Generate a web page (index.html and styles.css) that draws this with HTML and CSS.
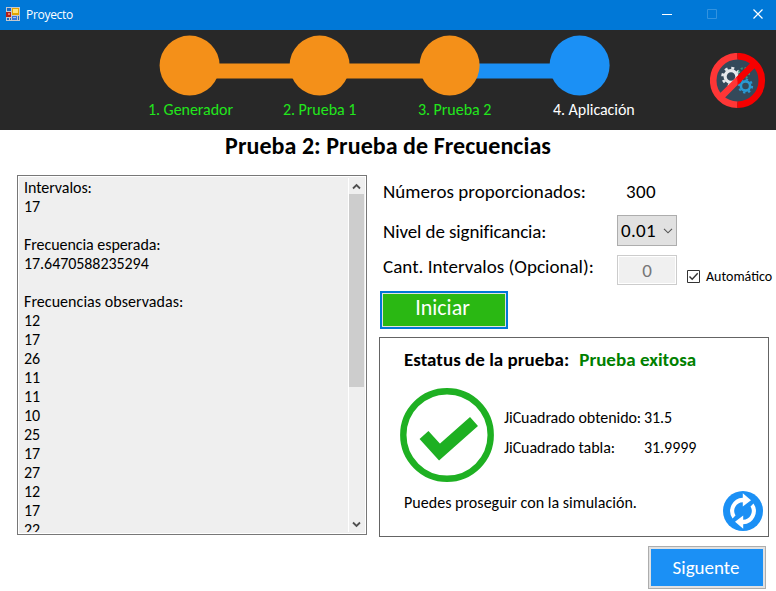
FILE: index.html
```html
<!DOCTYPE html>
<html lang="es">
<head>
<meta charset="utf-8">
<title>Proyecto</title>
<link rel="stylesheet" href="styles.css">
</head>
<body>
<header class="titlebar">
  <svg class="app-icon" width="14" height="14" viewBox="0 0 14 14" shape-rendering="crispEdges">
    <path d="M0 0h14v14H0z" fill="#c5c8cc"/>
    <path d="M1 1h4v3H1zM1 11h2v2H1zM4 11h1v2H4zM12 9h1v4h-1z" fill="#1768c4"/>
    <path d="M0 5h5v5H0z" fill="#b3201a"/><path d="M2 6h2v2H2z" fill="#ee7768"/>
    <path d="M6 1h7v7H6z" fill="#e2a400"/><path d="M7 2h5v4H7z" fill="#ffe477"/>
    <path d="M6 9h5v4H6z" fill="#3974d6"/><path d="M7 10h3v1H7z" fill="#99beff"/>
  </svg>
  <span class="app-name">Proyecto</span>
  <svg class="window-controls" width="98" height="12" viewBox="0 0 98 12" fill="none">
    <path d="M0 5.5h10" stroke="#fff"/>
    <path d="M45.5 .5h9v9h-9z" stroke="#3393df"/>
    <path d="M91.500 .5l9 9M100.500 .5l-9 9" stroke="#fff" stroke-width="1.2"/>
  </svg>
</header>
<section class="banner">
  <div class="stepper">
    <svg width="450" height="60" viewBox="0 0 450 60">
      <path d="M30 27.5h260v15H30z" fill="#f49019"/>
      <path d="M300 27.5h120v15H300z" fill="#1b90f5"/>
      <g fill="#f49019"><circle cx="29.6" cy="29.6" r="30"/><circle cx="159.6" cy="29.6" r="30"/><circle cx="289.6" cy="29.6" r="30"/></g>
      <circle cx="419.6" cy="29.6" r="30" fill="#1b90f5"/>
    </svg>
    <div class="step-labels">
      <span class="done">1. Generador</span><span class="done">2. Prueba 1</span><span class="done">3. Prueba 2</span><span>4. Aplicación</span>
    </div>
  </div>
  <svg class="stop" width="56" height="56" viewBox="0 0 56 56">
    <circle cx="27.5" cy="27.5" r="22" fill="#34495a"/>
    <circle cx="21" cy="23.500" r="5.9" fill="none" stroke="#e6e9ec" stroke-width="3.2"/>
    <circle cx="21" cy="23.500" r="8.5" fill="none" stroke="#e6e9ec" stroke-width="2.6" stroke-dasharray="3 3.676"/>
    <circle cx="34" cy="20" r="5" fill="none" stroke="#3a957c" stroke-width="2" stroke-dasharray="2 1.93"/>
    <circle cx="35.5" cy="33" r="4.6" fill="none" stroke="#2999d3" stroke-width="2.6"/>
    <circle cx="35.5" cy="33" r="6.6" fill="none" stroke="#2999d3" stroke-width="2" stroke-dasharray="2.4 2.784"/>
    <path d="M27.5 3.2A24.3 24.3 0 0 0 27.5 51.8M10.3 44.7L27.5 27.5" fill="none" stroke="#ff3636" stroke-width="6.6"/>
    <path d="M27.5 3.2A24.3 24.3 0 0 1 27.5 51.8M27.5 27.5L44.7 10.3" fill="none" stroke="#f60000" stroke-width="6.6"/>
    <path d="M27.500 22.800v9.400l-4.700 0z" fill="#ff3636"/><path d="M27.500 22.800v9.400l4.700-4.700z" fill="#f60000"/>
  </svg>
</section>
<main>
  <h1>Prueba 2: Prueba de Frecuencias</h1>
  <div class="columns">
    <div class="log">
      <pre>Intervalos:
17

Frecuencia esperada:
17.6470588235294

<span class="heading">Frecuencias observadas:</span>
12
17
26
11
11
10
25
17
27
12
17
22</pre>
      <div class="scrollbar">
        <svg width="15" height="17" viewBox="0 0 15 17"><path d="M4 10.500l3.500-3.500L11 10.500" fill="none" stroke="#505050" stroke-width="1.8"/></svg>
        <div class="thumb"></div>
        <svg width="15" height="17" viewBox="0 0 15 17"><path d="M4 7.500l3.500 3.500L11 7.500" fill="none" stroke="#505050" stroke-width="1.8"/></svg>
      </div>
    </div>
    <div class="panel">
      <div class="row numbers"><span class="label">Números proporcionados:</span><span class="count">300</span></div>
      <div class="row level"><span class="label">Nivel de significancia:</span>
        <div class="select"><span>0.01</span><svg width="10" height="6" viewBox="0 0 10 6"><path d="M1 .8l4 4 4-4" fill="none" stroke="#555" stroke-width="1.1"/></svg></div>
      </div>
      <div class="row amount"><span class="label">Cant. Intervalos (Opcional):</span>
        <div class="input">0</div>
        <div class="check"><svg width="13" height="13" viewBox="0 0 13 13"><path d="M.5.5h12v12H.5z" fill="#fff" stroke="#333"/><path d="M2.500 6.500l2.700 2.800 5.500-6" fill="none" stroke="#333" stroke-width="1.4"/></svg><span>Automático</span></div>
      </div>
      <div class="start">Iniciar</div>
      <div class="status">
        <div class="status-title"><span>Estatus de la prueba:</span><span class="verdict">Prueba exitosa</span></div>
        <div class="result">
          <svg width="94" height="94" viewBox="0 0 94 94"><circle cx="47" cy="47" r="43.7" fill="none" stroke="#1eb022" stroke-width="6.4"/><path d="M24 47l15.500 17L74 33.500" fill="none" stroke="#1eb022" stroke-width="12"/></svg>
          <div class="values"><span>JiCuadrado obtenido:</span><span>31.5</span><span>JiCuadrado tabla:</span><span>31.9999</span></div>
        </div>
        <div class="status-foot">
          <span class="message">Puedes proseguir con la simulación.</span>
          <svg class="refresh" width="40" height="40" viewBox="0 0 40 40"><circle cx="20" cy="20" r="20" fill="#1b90f5"/><g fill="#fff"><path id="turn" d="M9.500 27.500A13.300 13.300 0 0 1 19.800 6.700V2.300L28 9.200l-8.200 6.400V11.300A8.700 8.700 0 0 0 12.500 24.500z"/><use href="#turn" transform="rotate(180 20 20)"/></g></svg>
        </div>
      </div>
      <div class="next">Siguente</div>
    </div>
  </div>
</main>
</body>
</html>
```
FILE: styles.css
```css
* { box-sizing: border-box; }
body { margin: 0; width: 776px; height: 591px; overflow: hidden; background: #fff; color: #000; font-family: Carlito, Lato, "Liberation Sans", sans-serif; font-size: 16px; }
svg { display: block; flex: none; }
span { white-space: nowrap; }
.titlebar { height: 30px; background: #0078d7; display: flex; align-items: flex-start; padding: 7px 16px 0 6px; }
.app-name { font: 12px/16px "Open Sans", sans-serif; color: #fff; margin-left: 6px; letter-spacing: -.3px; }
.window-controls { margin: 2px 0 0 auto; overflow: visible; }
.banner { height: 100px; background: #282828; display: flex; padding: 6px 10px 0 148px; justify-content: space-between; }
.stepper > svg { margin-left: 12px; overflow: visible; }
.step-labels { display: grid; grid-template-columns: 135px 135px 135px 90px; line-height: 20px; margin-top: 4px; color: #fff; letter-spacing: -.05px; }
.done { color: #22e61c; }
.stop { margin-top: 17px; }
h1 { margin: 0; height: 45px; font-size: 24px; line-height: 32px; text-align: center; font-weight: 700; letter-spacing: .06px; }
.columns { display: flex; padding-left: 17px; }
.log { width: 350px; height: 360px; border: 1px solid #777; background: #efefef; box-shadow: inset 0 0 0 1px #fff; display: flex; justify-content: space-between; padding: 2px; overflow: hidden; }
pre { margin: 0; padding: 0 0 0 4px; font: inherit; line-height: 19px; overflow: hidden; height: 354px; letter-spacing: -.06px; }
.heading { letter-spacing: .05px; }
.scrollbar { width: 16px; border-left: 1px solid #fff; height: 354px; display: flex; flex-direction: column; }
.thumb { height: 193px; background: #cdcdcd; margin-bottom: auto; margin-top: -1px; }
.panel { width: 397px; padding-left: 12px; display: flex; flex-direction: column; }
.row { display: flex; align-items: flex-start; padding-left: 4px; font-size: 19px; line-height: 24px; }
.label { width: 234px; flex: none; }
.numbers { height: 40px; padding-top: 5px; letter-spacing: .05px; }
.count { margin-left: 9px; letter-spacing: .4px; }
.level { height: 40px; }
.level .label { padding-top: 5px; letter-spacing: -.1px; }
.select { width: 60px; height: 31px; border: 1px solid #adadad; background: #e1e1e1; display: flex; align-items: center; justify-content: space-between; padding: 0 3px; letter-spacing: .3px; }
.amount { height: 36px; }
.amount .label { letter-spacing: .03px; }
.input { width: 60px; flex: none; height: 30px; border: 1px solid #ccc; background: #f0f0f0; box-shadow: inset 0 0 0 1px #fff; text-align: center; line-height: 29px; color: #777; }
.check { display: flex; align-items: center; gap: 6px; margin: 11px 0 0 10px; height: 20px; font-size: 14px; }
.check span { padding-top: 1px; }
.start { width: 128px; height: 38px; margin-left: 1px; border: 2px solid #0078d7; box-shadow: inset 0 0 0 1px #e1e1e1; background: #2ab813; color: #fff; text-align: center; font-size: 22px; line-height: 30px; padding-right: 3px; }
.status { width: 390px; height: 200px; margin-top: 8px; border: 1px solid #646464; padding: 0 5px 0 20px; }
.status-title { padding: 10px 0 0 4px; font-size: 19px; font-weight: 700; line-height: 24px; display: flex; gap: 10px; letter-spacing: .02px; }
.verdict { color: #008000; }
.result { display: flex; margin-top: 16px; gap: 10px; }
.values { display: grid; grid-template: 30px 30px / 140px auto; line-height: 30px; padding-top: 15px; letter-spacing: -.06px; }
.status-foot { display: flex; justify-content: space-between; padding-left: 4px; margin-top: 9px; line-height: 24px; letter-spacing: .03px; }
.next { width: 118px; height: 43px; margin: 9px 0 0 269px; border: 1px solid #adadad; box-shadow: inset 0 0 0 2px #e1e1e1; background: #1b90f5; color: #fff; font-size: 19px; line-height: 42px; text-align: center; padding-right: 2px; }
```
